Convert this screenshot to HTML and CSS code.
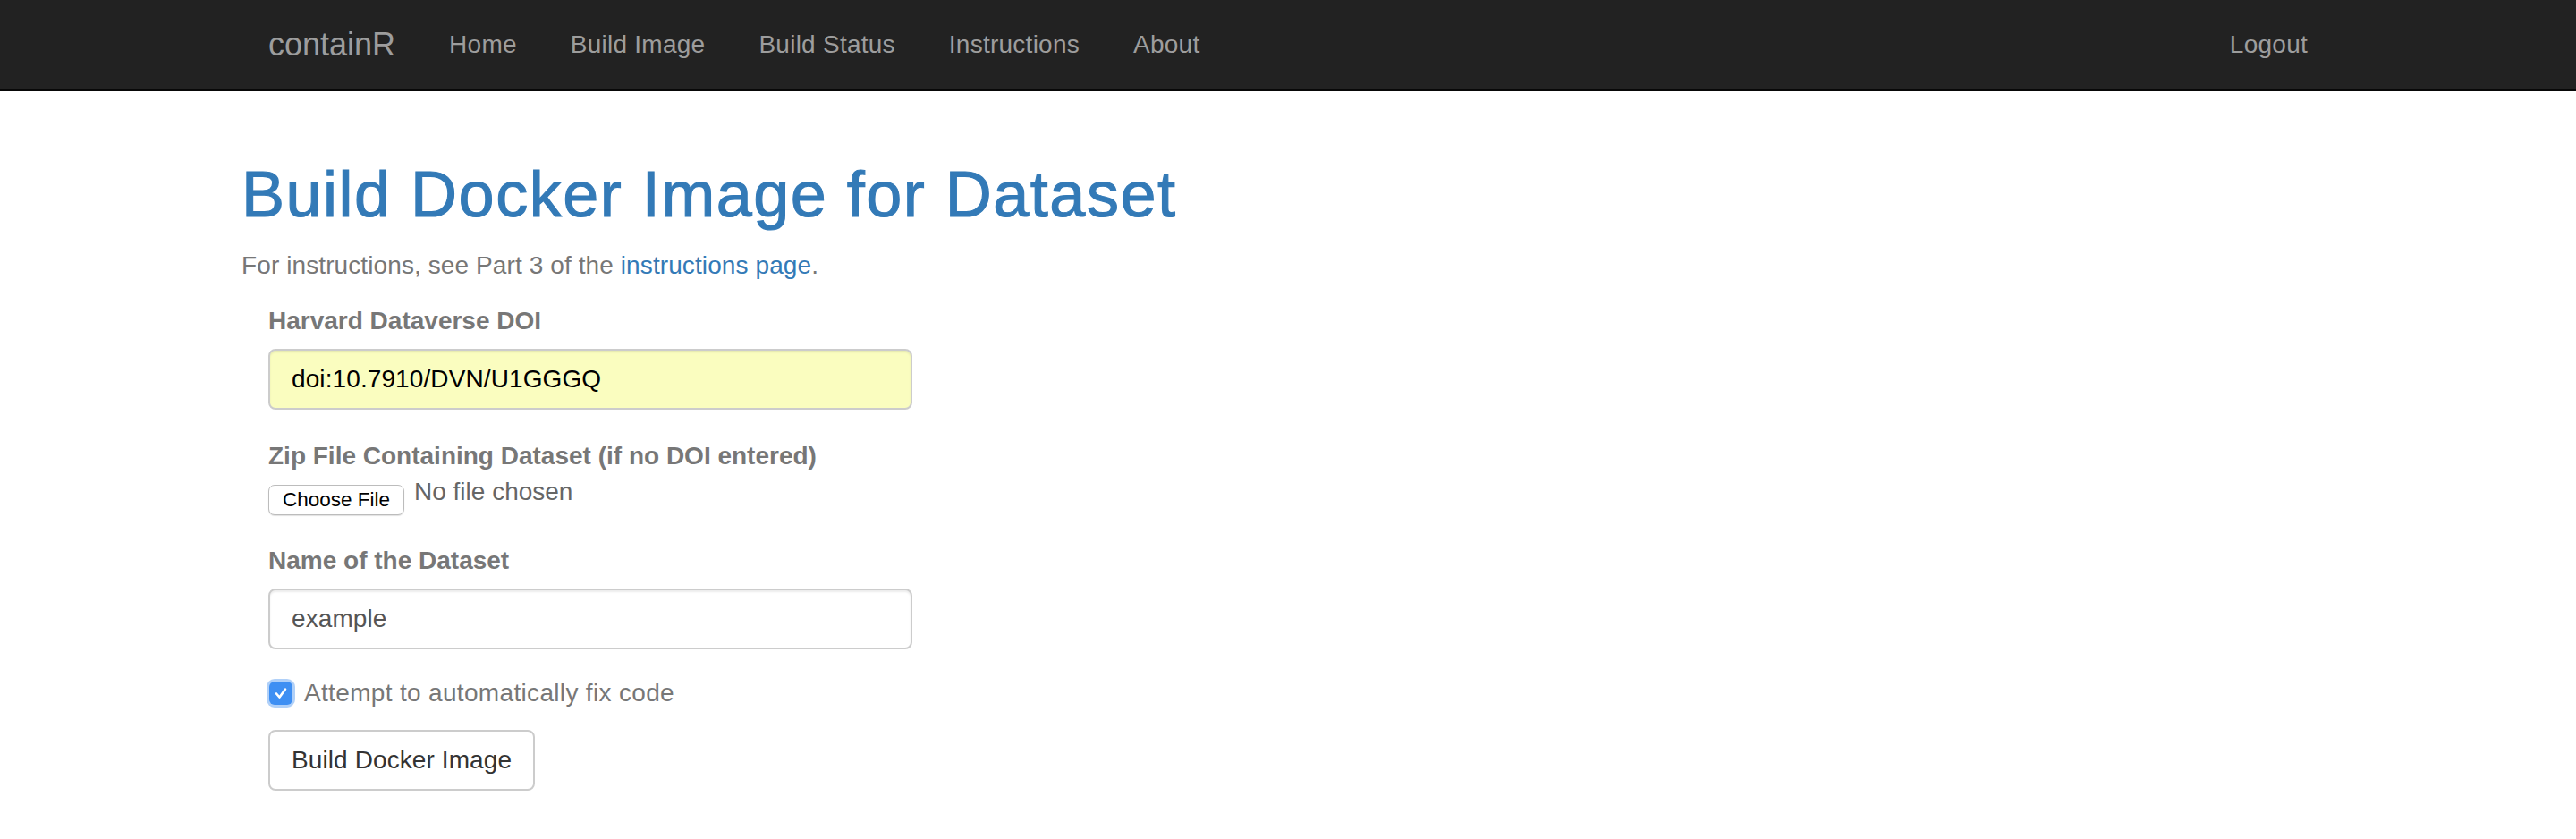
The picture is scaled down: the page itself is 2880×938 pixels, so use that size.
FILE: index.html
```html
<!DOCTYPE html>
<html lang="en">
<head>
<meta charset="utf-8">
<title>containR - Build Image</title>
<link rel="stylesheet" href="styles.css">
</head>
<body>
<nav class="navbar">
  <div class="nav-inner">
    <a class="brand" href="#">containR</a>
    <ul class="nav">
      <li><a href="#">Home</a></li>
      <li><a href="#">Build Image</a></li>
      <li><a href="#">Build Status</a></li>
      <li><a href="#">Instructions</a></li>
      <li><a href="#">About</a></li>
    </ul>
    <ul class="nav nav-right">
      <li><a href="#">Logout</a></li>
    </ul>
  </div>
</nav>
<main class="page">
  <h1 class="title">Build Docker Image for Dataset</h1>
  <p class="intro">For instructions, see Part 3 of the <a href="#">instructions page</a>.</p>
  <form class="form">
    <div class="form-group">
      <label class="label">Harvard Dataverse DOI</label>
      <div class="input input-autofill">doi:10.7910/DVN/U1GGGQ</div>
    </div>
    <div class="form-group">
      <label class="label">Zip File Containing Dataset (if no DOI entered)</label>
      <div class="file-row">
        <button type="button" class="file-btn">Choose File</button>
        <span class="file-name">No file chosen</span>
      </div>
    </div>
    <div class="form-group">
      <label class="label">Name of the Dataset</label>
      <div class="input">example</div>
    </div>
    <div class="checkbox">
      <span class="check-box"><svg width="26" height="26" viewBox="0 0 26 26"><path d="M8 13.5 L11.5 17.5 L18 8.5" fill="none" stroke="#fff" stroke-width="2.6" stroke-linecap="round" stroke-linejoin="round"/></svg></span>
      <span class="check-label">Attempt to automatically fix code</span>
    </div>
    <button type="button" class="btn">Build Docker Image</button>
  </form>
</main>
</body>
</html>
```

FILE: styles.css
```css
* { box-sizing: border-box; }
html, body { margin: 0; padding: 0; }
body {
  font-family: "Liberation Sans", Arial, Helvetica, sans-serif;
  font-size: 28px;
  line-height: 40px;
  color: #777;
  background: #fff;
}
a { text-decoration: none; }

.navbar {
  background: #222;
  border-bottom: 2px solid #080808;
  height: 102px;
}
.nav-inner {
  width: 2340px;
  margin: 0 auto;
  padding: 0 30px;
  display: flex;
  align-items: flex-start;
}
.brand {
  margin-left: -30px;
  padding: 30px;
  font-size: 36px;
  line-height: 40px;
  color: #9d9d9d;
}
.nav {
  list-style: none;
  margin: 0;
  padding: 0;
  display: flex;
}
.nav a {
  display: block;
  padding: 30px;
  line-height: 40px;
  color: #9d9d9d;
  letter-spacing: 0.25px;
}
.nav-right {
  margin-left: auto;
  margin-right: -30px;
}

.page {
  width: 2340px;
  margin: 0 auto;
}
.title {
  margin: 76px 0 20px;
  font-size: 72px;
  line-height: 79px;
  font-weight: 400;
  color: #337ab7;
  letter-spacing: 1.5px;
  -webkit-text-stroke: 1.1px #337ab7;
}
.intro {
  margin: 0 0 22px;
  letter-spacing: 0.1px;
}
.intro a { color: #337ab7; }

.form {
  padding-left: 30px;
  width: 750px;
}
.form-group { margin-bottom: 32px; }
.label {
  display: block;
  font-weight: 700;
  margin-bottom: 11px;
  color: #777;
}
.input {
  height: 68px;
  width: 720px;
  border: 2px solid #ccc;
  border-radius: 8px;
  padding: 12px 24px;
  line-height: 40px;
  color: #555;
  background: #fff;
  box-shadow: inset 0 2px 2px rgba(0,0,0,.075);
  letter-spacing: 0.1px;
}
.input-autofill {
  background: #fafdbf;
  color: #000;
}
.file-row {
  display: flex;
  align-items: flex-start;
  height: 34px;
  padding-top: 1px;
}
.file-btn {
  width: 152px;
  height: 34px;
  padding: 0;
  border: 1px solid #bcbcbc;
  border-radius: 7px;
  background: #fff;
  font-family: "Liberation Sans", Arial, sans-serif;
  font-size: 22.5px;
  line-height: 32px;
  color: #000;
  box-shadow: 0 1px 1px rgba(0,0,0,.12);
}
.file-name {
  margin-left: 11px;
  margin-top: -12px;
  color: #666;
}
.checkbox {
  display: flex;
  align-items: center;
  height: 40px;
  margin: 0 0 18px;
}
.check-box {
  width: 26px;
  height: 26px;
  margin-left: 1px;
  margin-top: -6px;
  border-radius: 6px;
  background: #3e8ff3;
  box-shadow: 0 0 0 3px rgba(80,150,240,.45);
  display: flex;
}
.check-label {
  margin-left: 13px;
  color: #777;
  margin-top: -6px;
  letter-spacing: 0.33px;
}
.btn {
  height: 68px;
  padding: 12px 24px;
  border: 2px solid #ccc;
  border-radius: 8px;
  background: #fff;
  font-family: "Liberation Sans", Arial, sans-serif;
  font-size: 28px;
  line-height: 40px;
  color: #333;
  letter-spacing: 0.1px;
}
```
